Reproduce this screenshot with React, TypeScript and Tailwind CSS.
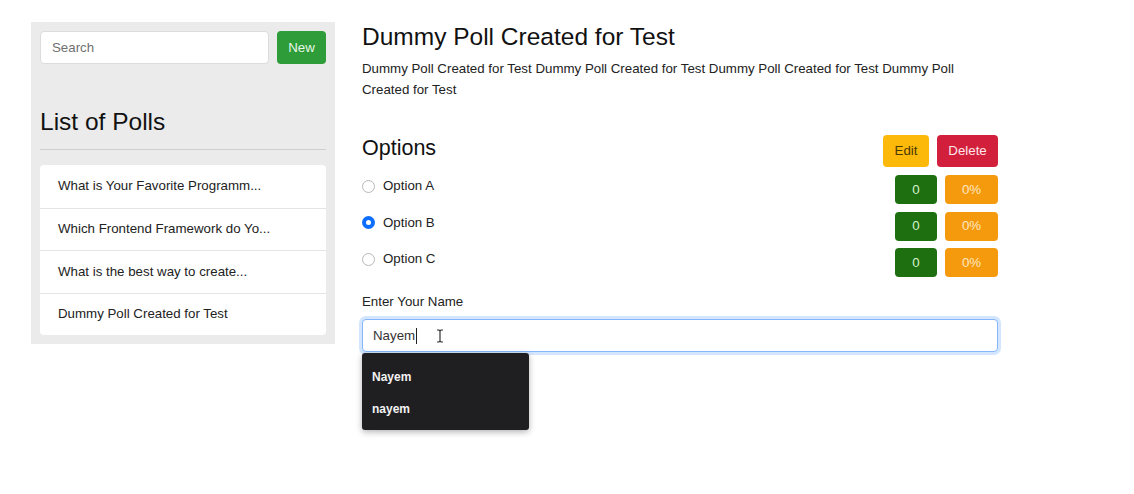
import React from 'react';

const polls = [
  'What is Your Favorite Programm...',
  'Which Frontend Framework do Yo...',
  'What is the best way to create...',
  'Dummy Poll Created for Test',
];

const options = [
  { label: 'Option A', checked: false },
  { label: 'Option B', checked: true },
  { label: 'Option C', checked: false },
];

function Radio({ checked }: { checked: boolean }) {
  if (checked) {
    return (
      <span className="flex h-[13px] w-[13px] items-center justify-center rounded-full bg-[#0d6efd]">
        <span className="h-[5px] w-[5px] rounded-full bg-white" />
      </span>
    );
  }
  return <span className="h-[13px] w-[13px] rounded-full border border-[#b8b8b8] bg-white" />;
}

export default function App() {
  return (
    <div
      className="min-h-[494px] bg-white text-[#212529]"
      style={{ fontFamily: '"Liberation Sans", Arial, sans-serif' }}
    >
      <div className="flex gap-[27px] pl-[31px] pt-[22px]">
        {/* sidebar */}
        <aside className="w-[304px] self-start bg-[#ebebeb] px-[9px] pt-[9px] pb-[9px]">
          <div className="flex gap-[8px]">
            <input
              readOnly
              placeholder="Search"
              className="h-[33px] flex-1 rounded-[4px] border border-[#dcdcdc] bg-white px-[11px] text-[13.3px] text-[#555] placeholder-[#707070] outline-none"
            />
            <button className="h-[33px] w-[49px] rounded-[4px] bg-[#2e9c38] text-[13.3px] text-[#e8f7e8]">
              New
            </button>
          </div>
          <h2 className="mt-[44px] text-[24.5px] leading-[28px] text-[#111]">List of Polls</h2>
          <hr className="mt-[13px] border-t border-[#cfcfcf]" />
          <ul className="mt-[15px] overflow-hidden rounded-[4px] bg-white">
            {polls.map((p, i) => (
              <li
                key={p}
                className={`flex h-[42.5px] items-center px-[18px] text-[13.3px] text-[#222] ${
                  i > 0 ? 'border-t border-[#e4e4e4]' : ''
                }`}
              >
                {p}
              </li>
            ))}
          </ul>
        </aside>

        {/* main */}
        <main className="w-[636px]">
          <h1 className="mt-[1px] text-[24.5px] leading-[28px] text-[#111]">Dummy Poll Created for Test</h1>
          <p className="mt-[7px] text-[13.3px] leading-[21px] text-[#222]">
            Dummy Poll Created for Test Dummy Poll Created for Test Dummy Poll Created for Test Dummy Poll
            Created for Test
          </p>

          <div className="mt-[35px] flex items-start justify-between">
            <h3 className="mt-[1px] text-[21.5px] leading-[24px] text-[#111]">Options</h3>
            <div className="flex gap-[8px]">
              <button className="h-[32px] w-[46px] rounded-[4px] bg-[#fcb90a] text-[13.3px] text-[#4a3a00]">
                Edit
              </button>
              <button className="h-[32px] w-[61px] rounded-[4px] bg-[#d21f3c] text-[13.3px] text-[#fde7ea]">
                Delete
              </button>
            </div>
          </div>

          <div className="mt-[8px] flex flex-col gap-[7.5px]">
            {options.map((o) => (
              <div key={o.label} className="flex h-[29px] items-start justify-between">
                <label className="mt-[1px] flex items-center gap-[8px] text-[13.3px] leading-[20px] text-[#222]">
                  <Radio checked={o.checked} />
                  {o.label}
                </label>
                <div className="flex gap-[8px]">
                  <span className="flex h-[29px] w-[42px] items-center justify-center rounded-[4px] bg-[#1d6f0f] text-[13.3px] text-[#d8f0d0]">
                    0
                  </span>
                  <span className="flex h-[29px] w-[53px] items-center justify-center rounded-[4px] bg-[#f59a0c] text-[13.3px] text-[#fde7c4]">
                    0%
                  </span>
                </div>
              </div>
            ))}
          </div>

          <div className="mt-[15px] text-[13.3px] leading-[20px] text-[#222]">Enter Your Name</div>
          <div className="relative mt-[7px]">
            <div className="flex h-[33px] items-center rounded-[4px] border border-[#86b7fe] bg-white px-[10px] text-[13.3px] text-[#333] shadow-[0_0_0_3px_rgba(13,110,253,0.18)]">
              <span>Nayem</span>
              <span className="ml-[1px] h-[16px] w-[1px] bg-[#222]" />
              <svg className="ml-[19px]" width="8" height="14" viewBox="0 0 8 14" fill="none" stroke="#333" strokeWidth="1.2">
                <path d="M1 1h2l1 1 1-1h2M4 2v10M1 13h2l1-1 1 1h2" />
              </svg>
            </div>
            <div className="absolute left-0 top-[34px] h-[77px] w-[167px] rounded-[3px] bg-[#1f1f21] pt-[15px] text-[12px] font-bold text-[#f2f2f2] shadow-[0_2px_6px_rgba(0,0,0,0.3)]">
              <div className="px-[10px] leading-[18px]">Nayem</div>
              <div className="mt-[14px] px-[10px] leading-[18px]">nayem</div>
            </div>
          </div>
        </main>
      </div>
    </div>
  );
}
